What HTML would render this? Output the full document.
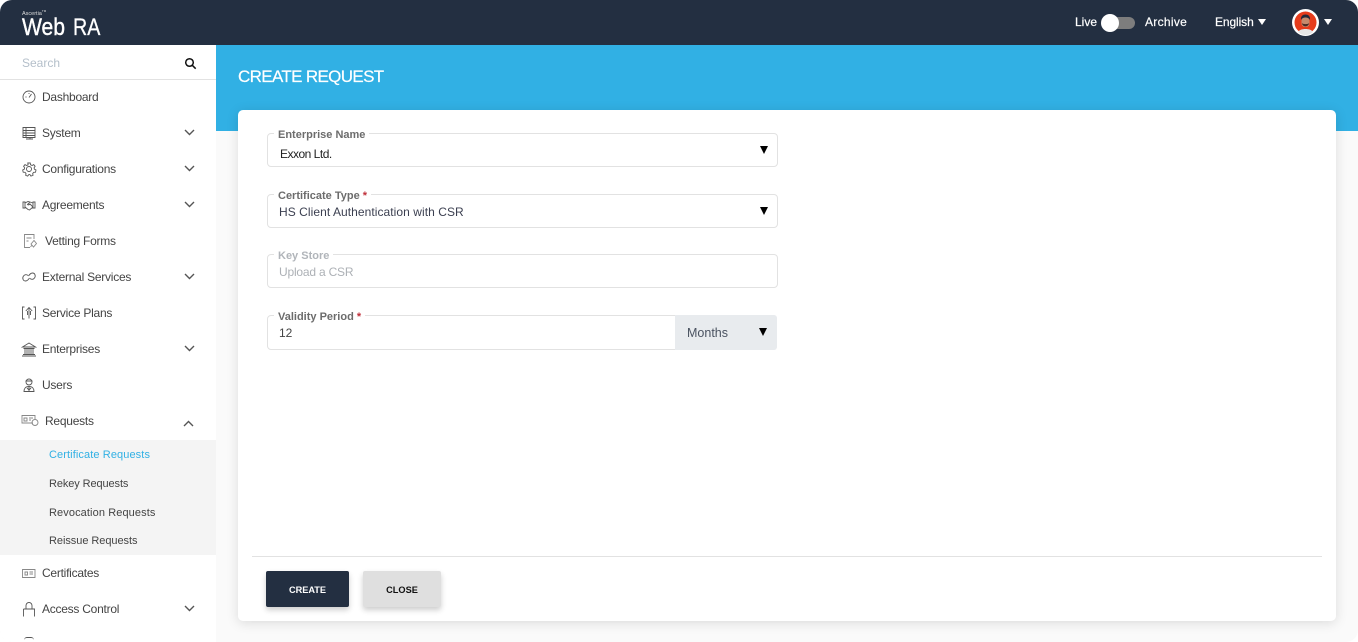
<!DOCTYPE html>
<html>
<head>
<meta charset="utf-8">
<style>
html,body{margin:0;padding:0;background:#fff;}
body{width:1358px;height:642px;overflow:hidden;position:relative;font-family:"Liberation Sans",sans-serif;}
#app{position:absolute;left:0;top:0;width:1358px;height:642px;border-radius:12px;overflow:hidden;background:#fafafa;}
.abs,.t{position:absolute;}
.t{white-space:nowrap;}
#top{left:0;top:0;width:1358px;height:45px;background:#232f41;}
#blue{left:216px;top:45px;width:1142px;height:86px;background:#31b0e4;}
#side{left:0;top:45px;width:216px;height:597px;background:#fff;}
#sub{left:0;top:440px;width:216px;height:115px;background:#f4f4f4;}
#card{left:238px;top:110px;width:1098px;height:511px;background:#fff;border-radius:5px;box-shadow:0 2px 12px rgba(0,0,0,.13);}
.m{left:42px;font-size:12px;color:#444;line-height:16px;letter-spacing:-.25px;}
.s{left:49px;font-size:11px;color:#444;line-height:14px;letter-spacing:.1px;}
svg.i{position:absolute;left:21px;width:16px;height:16px;fill:none;stroke:#555;stroke-width:.9;}
svg.c{position:absolute;left:183px;width:13px;height:9px;fill:none;stroke:#555;stroke-width:1.4;}
.box{position:absolute;left:267px;width:509px;height:32px;border:1px solid #e2e2e2;border-radius:4px;background:#fff;}
.lab{position:absolute;background:#fff;padding:0 4px;left:274px;font-size:11px;font-weight:bold;color:#6c6c6c;line-height:13px;}
.val{position:absolute;left:279px;font-size:12px;line-height:16px;color:#444;white-space:nowrap;}
.arr{position:absolute;width:0;height:0;border-left:4px solid transparent;border-right:4px solid transparent;border-top:8px solid #000;}
.star{color:#c0303a;}
.btn{position:absolute;top:571px;height:36px;border-radius:2px;font-size:9.2px;font-weight:bold;line-height:38px;text-align:center;box-shadow:0 3px 6px rgba(0,0,0,.2);}
.wt{color:#fff;font-size:12px;line-height:16px;-webkit-text-stroke:.2px #fff;}
.tri{position:absolute;width:0;height:0;border-left:4.5px solid transparent;border-right:4.5px solid transparent;border-top:6px solid #fff;}
</style>
</head>
<body>
<div id="app">
  <div class="abs" id="top"></div>
  <div class="abs" id="blue"></div>
  <div class="abs" id="side"></div>

  <!-- logo -->
  <div class="t" style="left:22px;top:8px;font-size:5.5px;line-height:7px;color:#ddd;">Ascertia<sup style="font-size:3px">TM</sup></div>
  <div class="t" style="left:22px;top:16px;font-size:24px;line-height:24px;color:#fff;transform:scaleX(.88);transform-origin:0 0;-webkit-text-stroke:.4px #fff;">Web</div>
  <div class="t" style="left:73px;top:16px;font-size:24px;line-height:24px;color:#fff;transform:scaleX(.82);transform-origin:0 0;-webkit-text-stroke:.3px #fff;">RA</div>

  <!-- header right -->
  <div class="t wt" style="left:1075px;top:14px;">Live</div>
  <div class="abs" style="left:1102px;top:17px;width:33px;height:12px;border-radius:6px;background:#7d7d7d;"></div>
  <div class="abs" style="left:1101px;top:14px;width:18px;height:18px;border-radius:50%;background:#fff;"></div>
  <div class="t wt" style="left:1145px;top:14px;letter-spacing:.3px;">Archive</div>
  <div class="t wt" style="left:1215px;top:14px;letter-spacing:-.1px;">English</div>
  <div class="tri" style="left:1257.500px;top:19px;"></div>
  <svg class="abs" style="left:1292px;top:9px;" width="27" height="27" viewBox="0 0 27 27">
    <circle cx="13.500" cy="13.500" r="13.500" fill="#fff"/>
    <circle cx="13.500" cy="13.500" r="11" fill="#e63c1c"/>
    <path d="M6 23c2-4 13-4 15 0a11 11 0 0 1-15 0z" fill="#e6e6e6"/>
    <rect x="9.500" y="8" width="8" height="10" rx="3.500" fill="#c58a6c"/>
    <path d="M9 11c-.5-4 2-5.500 4.500-5.500S18.500 7 18 11c-1-2-3-2.500-4.500-2.500S10 9 9 11z" fill="#232a3a"/>
    <path d="M9.800 14c.8 4.500 6.600 4.500 7.400 0-1 1.500-6.400 1.500-7.400 0z" fill="#4a2b25"/>
  </svg>
  <div class="tri" style="left:1324px;top:19px;"></div>

  <!-- search -->
  <div class="t" style="left:22px;top:55px;font-size:12px;line-height:16px;color:#b4bfca;">Search</div>
  <svg class="abs" style="left:184px;top:57px;" width="13" height="13" viewBox="0 0 13 13" fill="none" stroke="#111" stroke-width="1.500"><circle cx="5.500" cy="5.500" r="3.800"/><path d="M8.300 8.300l3.400 3.400"/></svg>
  <div class="abs" style="left:0;top:79px;width:216px;height:1px;background:#e2e2e2;"></div>

  <!-- menu -->
  <div class="abs" id="sub"></div>

  <svg class="i" style="top:89px" viewBox="0 0 16 16"><circle cx="8" cy="8" r="6"/><path d="M8 8.500l2.500-3.500M4.500 8h1M8 4v1"/></svg>
  <div class="t m" style="top:89px">Dashboard</div>

  <svg class="i" style="top:125px" viewBox="0 0 16 16"><path d="M2 2.500h12v10H2zM2 5.500h12M2 8h12M2 10.500h12M5 2.500v10M9 12.500v2M5 14h7"/></svg>
  <div class="t m" style="top:125px">System</div>
  <svg class="c" style="top:128px" viewBox="0 0 13 9"><path d="M2 2l4.500 4.500L11 2"/></svg>

  <svg class="i" style="top:161px" viewBox="0 0 16 16"><circle cx="8" cy="8" r="2.500"/><path d="M6.800 2h2.400l.4 1.800 1.500.7 1.600-.9 1.400 1.700-1 1.500.3 1.400 1.600.8-.5 2.200-1.800.1-1 1.200.3 1.800-2.100.8-1-1.500H7.800l-1.100 1.500-2-.8.300-1.800-1-1.200-1.800-.1-.5-2.200 1.600-.8.300-1.400-1-1.500 1.400-1.700 1.600.9 1.500-.7z"/></svg>
  <div class="t m" style="top:161px">Configurations</div>
  <svg class="c" style="top:164px" viewBox="0 0 13 9"><path d="M2 2l4.500 4.500L11 2"/></svg>

  <svg class="i" style="top:197px" viewBox="0 0 16 16"><path d="M2 5h2v6H2zM14 5h-2v6h2zM4 6l3-1.500 2 .5 3 1M4 10l3 2.500 1.500.5 3.500-3M9 5L6.500 7.500c1 1 2 0 2.500-.5l3 3"/></svg>
  <div class="t m" style="top:197px">Agreements</div>
  <svg class="c" style="top:200px" viewBox="0 0 13 9"><path d="M2 2l4.500 4.500L11 2"/></svg>

  <svg class="i" style="top:233px;left:22px;stroke:#888" viewBox="0 0 16 16"><path d="M12 6V1.500H2.500v13H8M4.500 5h5M4.500 8h2M9 11l3-3.500 2.500 3-3 3.500zM10 12l-1.500 2"/></svg>
  <div class="t m" style="top:233px;left:45px">Vetting Forms</div>

  <svg class="i" style="top:269px" viewBox="0 0 16 16"><path d="M7 6.500a3 3 0 0 0-4.500.5c-1.500 2-.5 5 2 5 1.500 0 3-1.500 4-3M9 9.500a3 3 0 0 0 4.500-.5c1.500-2 .5-5-2-5-1.500 0-3 1.500-4 3"/></svg>
  <div class="t m" style="top:269px">External Services</div>
  <svg class="c" style="top:272px" viewBox="0 0 13 9"><path d="M2 2l4.500 4.500L11 2"/></svg>

  <svg class="i" style="top:305px" viewBox="0 0 16 16"><path d="M3.500 2H1.500v12h2M12.500 2h2v12h-2M8 13.500V3M4.800 6L8 2.500 11.200 6M6 6h0M6.500 6v4M9.500 6v4"/></svg>
  <div class="t m" style="top:305px">Service Plans</div>

  <svg class="i" style="top:341px" viewBox="0 0 16 16"><path d="M1.500 6L8 2l6.500 4zM2.500 7.500h11M4 8v5M6 8v5M8 8v5M10 8v5M12 8v5M2 13.500h12M1 15h14"/></svg>
  <div class="t m" style="top:341px">Enterprises</div>
  <svg class="c" style="top:344px" viewBox="0 0 13 9"><path d="M2 2l4.500 4.500L11 2"/></svg>

  <svg class="i" style="top:377px" viewBox="0 0 16 16"><circle cx="8" cy="5" r="3"/><path d="M4.500 4h7M3 14.500c0-3 1.500-5 5-5s5 2 5 5zM8 9.500v5M6 11l2 2 2-2"/></svg>
  <div class="t m" style="top:377px">Users</div>

  <svg class="abs" style="left:21px;top:414px;fill:none;stroke:#888;stroke-width:.9;" width="18" height="14" viewBox="0 0 18 14"><path d="M12 9H1V1.500h13V5M3 4h3v3H3zM8 4h4M8 6h2"/><circle cx="14" cy="8.500" r="3"/></svg>
  <div class="t m" style="top:413px;left:45px">Requests</div>
  <svg class="c" style="top:419px;left:182px" viewBox="0 0 13 9"><path d="M2 7l4.500-4.500L11 7"/></svg>

  <div class="t s" style="top:448px;color:#31b0e4">Certificate Requests</div>
  <div class="t s" style="top:477px;letter-spacing:-.1px">Rekey Requests</div>
  <div class="t s" style="top:506px">Revocation Requests</div>
  <div class="t s" style="top:534px;letter-spacing:-.05px">Reissue Requests</div>

  <svg class="abs" style="left:22px;top:567px;fill:none;stroke:#888;stroke-width:.9;" width="14" height="12" viewBox="0 0 14 12"><path d="M.5 2.500h12.500v8H.5zM3 5h2.500v3H3zM7.500 5h3.500M7.500 7h3.500"/></svg>
  <div class="t m" style="top:565px">Certificates</div>

  <svg class="i" style="top:601px" viewBox="0 0 16 16"><path d="M2.500 8h11v7.500M2.500 15.500V8M5 8V4.500a3 3 0 0 1 6 0V8"/></svg>
  <div class="t m" style="top:601px">Access Control</div>
  <svg class="c" style="top:604px" viewBox="0 0 13 9"><path d="M2 2l4.500 4.500L11 2"/></svg>
  <div class="abs" style="left:24px;top:637px;width:10px;height:5px;border-top:1px solid #555;border-radius:3px;"></div>

  <!-- title -->
  <div class="t" style="left:238px;top:67px;font-size:17px;line-height:20px;color:#fff;letter-spacing:-.65px;-webkit-text-stroke:.2px #fff;">CREATE REQUEST</div>

  <!-- card -->
  <div class="abs" id="card"></div>

  <div class="box" style="top:133px"></div>
  <div class="lab" style="top:129px">Enterprise Name</div>
  <div class="val" style="left:280px;top:146px;color:#222;letter-spacing:-.5px;">Exxon Ltd.</div>
  <div class="arr" style="left:760px;top:146px"></div>

  <div class="box" style="top:194px"></div>
  <div class="lab" style="top:190px">Certificate Type <span class="star">*</span></div>
  <div class="val" style="top:204px;color:#3b3f50;letter-spacing:.06px;">HS Client Authentication with CSR</div>
  <div class="arr" style="left:760px;top:207px"></div>

  <div class="box" style="top:254px"></div>
  <div class="lab" style="top:250px;color:#b1b5ba">Key Store</div>
  <div class="val" style="top:264px;color:#adb1b6;letter-spacing:-.2px;">Upload a CSR</div>

  <div class="box" style="top:315px;width:508px;height:33px"></div>
  <div class="lab" style="top:311px">Validity Period <span class="star">*</span></div>
  <div class="val" style="top:325px">12</div>
  <div class="abs" style="left:675px;top:315px;width:102px;height:35px;background:#e8ebee;border-radius:0 3px 3px 0;"></div>
  <div class="val" style="left:687px;top:325px;color:#4a5260;font-size:12.500px;">Months</div>
  <div class="arr" style="left:759px;top:328px"></div>

  <div class="abs" style="left:252px;top:556px;width:1070px;height:1px;background:#e2e2e2;"></div>
  <div class="btn" style="left:266px;width:83px;background:#232f41;color:#fff;">CREATE</div>
  <div class="btn" style="left:363px;width:78px;background:#dfdfdf;color:#111;">CLOSE</div>
</div>
</body>
</html>
